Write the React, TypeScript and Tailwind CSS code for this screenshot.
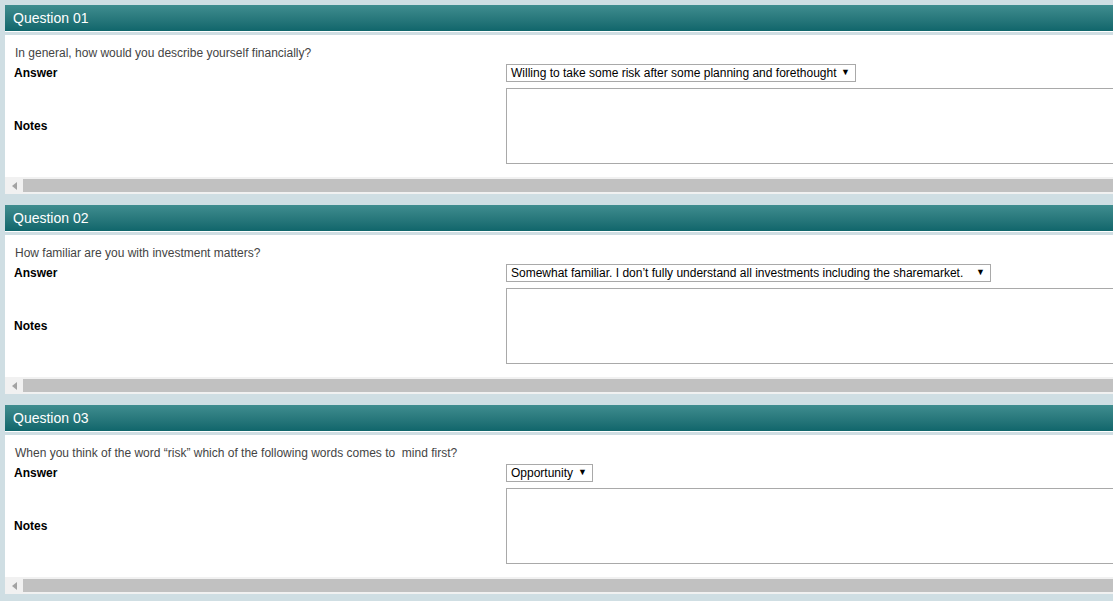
export default function App() {
  const questions = [
    {
      num: "01",
      text: "In general, how would you describe yourself financially?",
      answer: "Willing to take some risk after some planning and forethought",
      width: "w-[350px]",
    },
    {
      num: "02",
      text: "How familiar are you with investment matters?",
      answer: "Somewhat familiar. I don\u2019t fully understand all investments including the sharemarket.",
      width: "w-[485px]",
    },
    {
      num: "03",
      text: "When you think of the word \u201crisk\u201d which of the following words comes to  mind first?",
      answer: "Opportunity",
      width: "w-[87px]",
    },
  ];

  return (
    <div className="w-[1113px] h-[601px] overflow-hidden bg-[#cfdee3] pt-[5px] pl-[5px] font-['Liberation_Sans',Arial,sans-serif]">
      {questions.map((q) => (
        <div key={q.num} className="w-[1140px] mb-[11px]">
          {/* Header */}
          <div className="h-[26px] bg-gradient-to-b from-[#3f8d8f] to-[#0f666b] border-b border-white box-content flex items-center pl-[8px]">
            <span className="text-[14px] text-white leading-none">Question {q.num}</span>
          </div>

          {/* Body */}
          <div className="mt-[3px] h-[142px] bg-white pt-[11px] pl-[9px]">
            <div className="pl-[1px] text-[12px] leading-[14px] text-[#444] whitespace-pre">{q.text}</div>
            <div className="mt-[4px] flex items-center h-[18px]">
              <span className="w-[492px] text-[12px] font-bold text-black">Answer</span>
              <div
                className={`${q.width} h-[18px] border border-[#a9a9a9] flex items-center justify-between pl-[4px] pr-[5px] text-[12px] text-black whitespace-nowrap`}
              >
                <span>{q.answer}</span>
                <span className="text-[9px]">▼</span>
              </div>
            </div>
            <div className="mt-[6px] flex items-center h-[76px]">
              <span className="w-[492px] text-[12px] font-bold text-black">Notes</span>
              <div className="w-[640px] h-[76px] border border-[#a9a9a9]" />
            </div>
          </div>

          {/* Horizontal scrollbar */}
          <div className="h-[17px] bg-[#f1f1f1] flex items-center">
            <div className="w-[18px] flex items-center justify-center">
              <svg width="5" height="8" viewBox="0 0 5 8">
                <path d="M5 0 L0 4 L5 8 Z" fill="#a3a3a3" />
              </svg>
            </div>
            <div className="flex-1 h-[13px] bg-[#c1c1c1]" />
          </div>
        </div>
      ))}
    </div>
  );
}
